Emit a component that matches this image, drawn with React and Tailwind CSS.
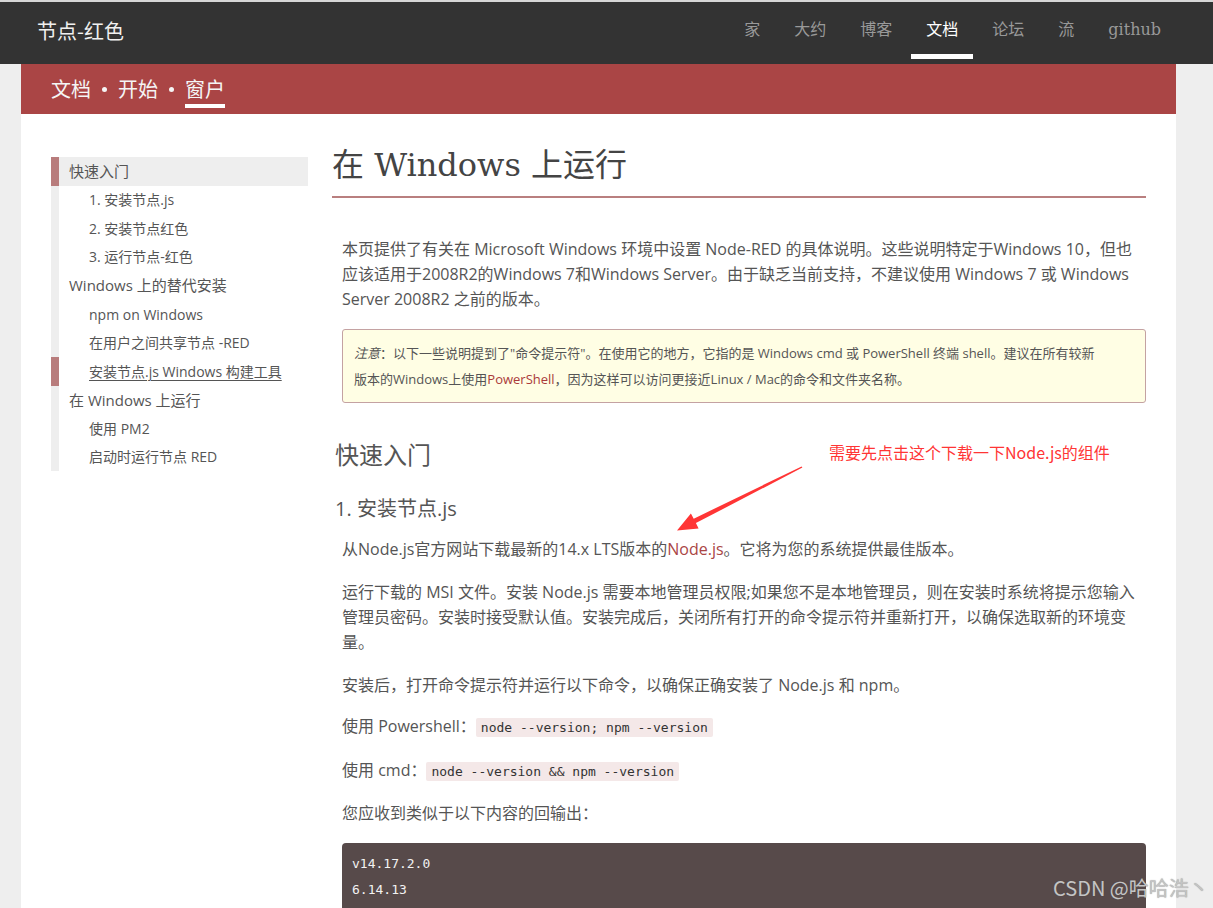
import React from 'react';

const navItems = ['家', '大约', '博客', '文档', '论坛', '流', 'github'];

const sideItems = [
  { label: '快速入门', level: 0, active: true, bg: true },
  { label: '1. 安装节点.js', level: 1 },
  { label: '2. 安装节点红色', level: 1 },
  { label: '3. 运行节点-红色', level: 1 },
  { label: 'Windows 上的替代安装', level: 0 },
  { label: 'npm on Windows', level: 1 },
  { label: '在用户之间共享节点 -RED', level: 1 },
  { label: '安装节点.js Windows 构建工具', level: 1, active: true, underline: true },
  { label: '在 Windows 上运行', level: 0 },
  { label: '使用 PM2', level: 1 },
  { label: '启动时运行节点 RED', level: 1 },
];

const Code = ({ children }) => (
  <code className="rounded-[2px] bg-[#f4e8e8] px-[5px] py-[2px] font-['DejaVu_Sans_Mono',monospace] text-[13px] text-[#333]">
    {children}
  </code>
);

const App = () => {
  return (
    <div className="relative h-[908px] w-[1213px] overflow-hidden bg-[#eeeeee] font-['Open_Sans','Noto_Sans_CJK_SC',sans-serif] text-[#555]">
      {/* top bar */}
      <header className="flex h-[64px] items-center justify-between border-t-2 border-[#d6d6d6] bg-[#333333] pl-[37px] pr-[35px]">
        <div className="pb-[4px] font-['Noto_Sans_CJK_SC',sans-serif] text-[20px] text-[#f0f0f0]">节点-红色</div>
        <nav className="flex h-full items-stretch">
          {navItems.map((item) => (
            <div
              key={item}
              className={`relative flex items-center px-[17px] pb-[7px] font-['DejaVu_Serif','Noto_Sans_CJK_SC',serif] text-[16px] ${
                item === '文档' ? 'text-white' : 'text-[#999]'
              }`}
            >
              {item}
              {item === '文档' && <span className="absolute bottom-[5px] left-[2px] right-[2px] h-[5px] bg-white" />}
            </div>
          ))}
        </nav>
      </header>

      <div className="ml-[21px] h-[844px] w-[1155px] bg-white">
        {/* breadcrumb */}
        <div className="flex h-[50px] items-center gap-[11px] bg-[#aa4545] pl-[30px] font-['Noto_Sans_CJK_SC',sans-serif] text-[20px] leading-[28px] text-[#f5f5f5]">
          <span>文档</span>
          <span className="h-[5px] w-[5px] rounded-full bg-[#f5f5f5]" />
          <span>开始</span>
          <span className="h-[5px] w-[5px] rounded-full bg-[#f5f5f5]" />
          <span className="relative">
            窗户
            <span className="absolute left-0 right-0 top-[29px] h-[4px] bg-white" />
          </span>
        </div>

        <div className="flex px-[30px]">
          {/* sidebar */}
          <aside className="mt-[43px] w-[257px] shrink-0">
            {sideItems.map((it) => (
              <div
                key={it.label}
                className={`flex h-[28.57px] items-center border-l-[8px] ${
                  it.active ? 'border-[#b87c7c]' : 'border-[#eeeeee]'
                } ${it.bg ? 'bg-[#eeeeee]' : ''} ${
                  it.level === 0 ? 'pl-[10px] text-[15px]' : 'pl-[30px] text-[14px]'
                } ${it.underline ? 'underline underline-offset-[3px]' : ''} text-[#555]`}
              >
                {it.label}
              </div>
            ))}
          </aside>

          {/* main */}
          <main className="ml-[24px] w-[814px]">
            <h1 className="mt-[31px] border-b-2 border-[#b97f7f] pb-[11px] font-['DejaVu_Serif','Noto_Sans_CJK_SC',serif] text-[32px] leading-[40px] text-[#444]">
              在 Windows 上运行
            </h1>

            <p className="ml-[10px] mt-[39px] text-[16px] leading-[25px]">
              本页提供了有关在 Microsoft Windows 环境中设置 Node-RED 的具体说明。这些说明特定于Windows 10，但也应该适用于2008R2的Windows 7和Windows Server。由于缺乏当前支持，不建议使用 Windows 7 或 Windows Server 2008R2 之前的版本。
            </p>

            <div className="ml-[10px] mt-[17px] rounded-[3px] border border-[#c4a2a2] bg-[#fffee4] px-[11px] py-[10px] text-[13px] leading-[26px] text-[#555]">
              <em>注意</em>：以下一些说明提到了"命令提示符"。在使用它的地方，它指的是 Windows cmd 或 PowerShell 终端 shell。建议在所有较新
              <br />
              版本的Windows上使用<span className="text-[#aa3a3a]">PowerShell</span>，因为这样可以访问更接近Linux / Mac的命令和文件夹名称。
            </div>

            <h2 className="ml-[3px] mt-[35px] font-['Noto_Sans_CJK_SC',sans-serif] text-[24px] leading-[32px] text-[#555]">
              快速入门
            </h2>

            <h3 className="ml-[3px] mt-[25px] text-[20px] leading-[28px] text-[#555]">1. 安装节点.js</h3>

            <p className="ml-[10px] mt-[14px] text-[16px] leading-[25px]">
              从Node.js官方网站下载最新的14.x LTS版本的<span className="text-[#aa4545]">Node.js</span>。它将为您的系统提供最佳版本。
            </p>

            <p className="ml-[10px] mt-[18px] text-[16px] leading-[25px]">
              运行下载的 MSI 文件。安装 Node.js 需要本地管理员权限;如果您不是本地管理员，则在安装时系统将提示您输入管理员密码。安装时接受默认值。安装完成后，关闭所有打开的命令提示符并重新打开，以确保选取新的环境变量。
            </p>

            <p className="ml-[10px] mt-[18px] text-[16px] leading-[25px]">
              安装后，打开命令提示符并运行以下命令，以确保正确安装了 Node.js 和 npm。
            </p>

            <p className="ml-[10px] mt-[16px] text-[16px] leading-[25px]">
              使用 Powershell：<Code>node --version; npm --version</Code>
            </p>

            <p className="ml-[10px] mt-[18px] text-[16px] leading-[25px]">
              使用 cmd：<Code>node --version &amp;&amp; npm --version</Code>
            </p>

            <p className="ml-[10px] mt-[17px] text-[16px] leading-[25px]">您应收到类似于以下内容的回输出：</p>

            <pre className="ml-[10px] mt-[17px] rounded-[4px] bg-[#574a4a] px-[10px] pb-[20px] pt-[8px] font-['DejaVu_Sans_Mono',monospace] text-[13px] leading-[26px] text-[#f2f2f2]">
              {'v14.17.2.0\n6.14.13'}
            </pre>
          </main>
        </div>
      </div>

      {/* annotation */}
      <div className="absolute left-[829px] top-[440px] font-['Noto_Sans_CJK_SC',sans-serif] text-[16px] leading-[24px] text-[#ff3535]">
        需要先点击这个下载一下Node.js的组件
      </div>
      <svg className="pointer-events-none absolute left-0 top-0" width="1213" height="908">
        <polygon
          points="802.4,467.6 695.9,523.1 698.6,528.4 677,530.5 690.9,513.6 693.7,518.7 801.6,466.4"
          fill="#ff3535"
        />
      </svg>

      {/* watermark */}
      <div className="absolute left-[1053px] top-[875px] font-['Noto_Sans_CJK_SC',sans-serif] text-[20px] leading-[26px] text-[#c4c4c4] [text-shadow:0_0_1px_rgba(80,80,80,0.6)]">
        CSDN @哈哈浩丶
      </div>
    </div>
  );
};

export default App;
